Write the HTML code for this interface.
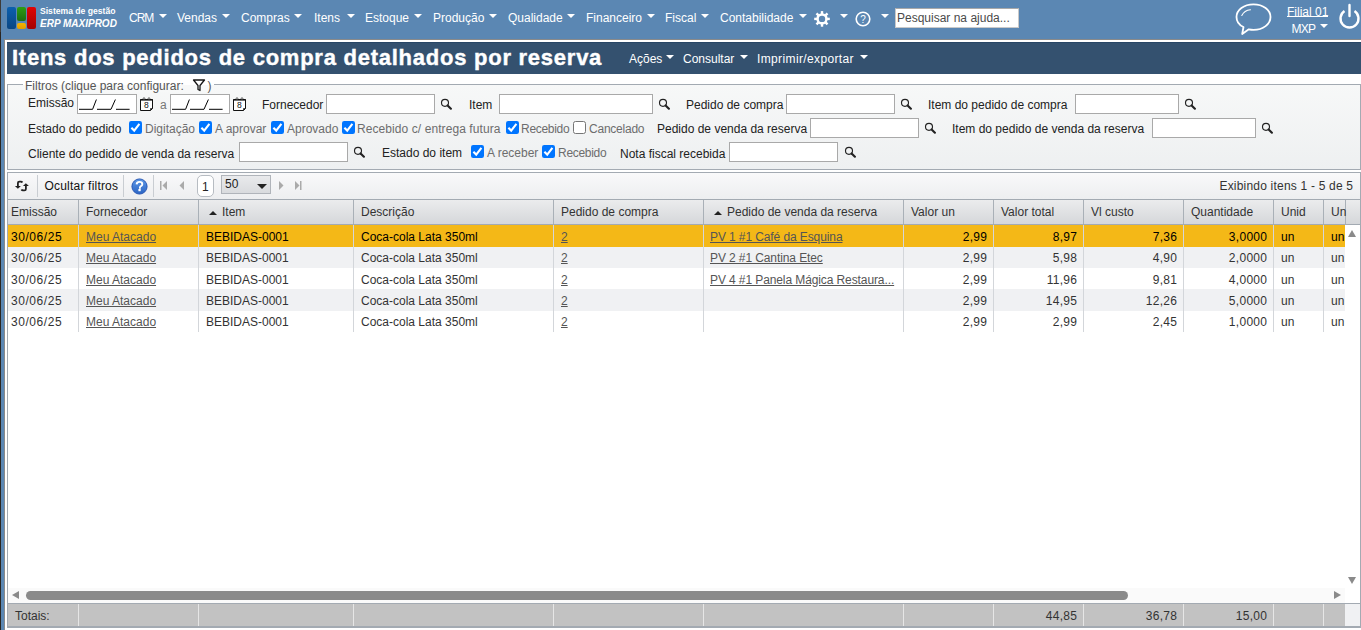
<!DOCTYPE html>
<html><head><meta charset="utf-8">
<style>
*{box-sizing:border-box}
html,body{margin:0;padding:0}
body{width:1361px;height:630px;overflow:hidden;position:relative;background:#5b87b3;font-family:"Liberation Sans",sans-serif;font-size:12px;color:#222}
.a{position:absolute}
.t{position:absolute;white-space:nowrap;line-height:14px}
.nav{color:#fff}
.arr{position:absolute;width:0;height:0;border-left:4px solid transparent;border-right:4px solid transparent;border-top:4px solid #fff}
#strip{left:0;top:0;width:1px;height:630px;background:#2a2622}
#page{left:4px;top:39px;width:1357px;height:591px;background:#fff;border-left:1px solid #8a8a8a;border-top:1px solid #8a8a8a}
#title{left:7px;top:42px;width:1354px;height:32px;background:#34516f;border-top:1px solid #284666}
.inp{position:absolute;background:#fff;border:1px solid #a9a9a9}
.cb{position:absolute;width:13px;height:13px;border-radius:2px;background:#1a73e8}
.cbu{position:absolute;width:13px;height:13px;border-radius:2.5px;background:#fff;border:1px solid #767676}
.lbl{color:#222}
.opt{color:#6d6d6d}
.hd{color:#333}
.cell{color:#333}
.sel{color:#000}
.lk{color:#555;text-decoration:underline}
.tot{color:#333}
</style></head><body>
<div class="a" id="strip"></div><div class="a" style="left:0;top:0;width:1px;height:32px;background:#3d3b38"></div>

<!-- logo -->
<div class="a" style="left:7px;top:7px;width:9px;height:22px;border-radius:2px;background:linear-gradient(#0b5fae,#0a4683)"></div>
<div class="a" style="left:17px;top:7px;width:9px;height:14px;border-radius:2px;background:linear-gradient(#2d9e12,#1d6e12)"></div>
<div class="a" style="left:17px;top:23px;width:9px;height:6px;border-radius:2px;background:linear-gradient(#f3b200,#e39d00)"></div>
<div class="a" style="left:27px;top:7px;width:9px;height:22px;border-radius:2px;background:linear-gradient(#e00404,#a30303)"></div>
<div class="t nav" style="left:40px;top:5px;font-size:8.6px;font-weight:bold;line-height:12px">Sistema de gestão</div>
<div class="t nav" style="left:40px;top:17.8px;font-size:10px;font-weight:bold;font-style:italic;line-height:12px">ERP MAXIPROD</div>

<!-- nav -->
<div class="t nav" style="left:129px;top:11px;letter-spacing:-1px">CRM</div><div class="arr" style="left:159px;top:14px"></div>
<div class="t nav" style="left:177px;top:11px">Vendas</div><div class="arr" style="left:222px;top:14px"></div>
<div class="t nav" style="left:241px;top:11px">Compras</div><div class="arr" style="left:294px;top:14px"></div>
<div class="t nav" style="left:314px;top:11px">Itens</div><div class="arr" style="left:347px;top:14px"></div>
<div class="t nav" style="left:365px;top:11px">Estoque</div><div class="arr" style="left:414px;top:14px"></div>
<div class="t nav" style="left:433px;top:11px">Produção</div><div class="arr" style="left:489px;top:14px"></div>
<div class="t nav" style="left:508px;top:11px">Qualidade</div><div class="arr" style="left:567px;top:14px"></div>
<div class="t nav" style="left:586px;top:11px">Financeiro</div><div class="arr" style="left:647px;top:14px"></div>
<div class="t nav" style="left:665px;top:11px">Fiscal</div><div class="arr" style="left:701px;top:14px"></div>
<div class="t nav" style="left:720px;top:11px">Contabilidade</div><div class="arr" style="left:799px;top:14px"></div>
<!-- gear -->
<svg class="a" style="left:814px;top:11px" width="16" height="16" viewBox="0 0 16 16">
 <g fill="#fff" transform="translate(8 7.9)">
  <rect x="-1.2" y="-7.8" width="2.4" height="15.6"/>
  <rect x="-1.2" y="-7.8" width="2.4" height="15.6" transform="rotate(45)"/>
  <rect x="-1.2" y="-7.8" width="2.4" height="15.6" transform="rotate(90)"/>
  <rect x="-1.2" y="-7.8" width="2.4" height="15.6" transform="rotate(135)"/>
 </g>
 <circle cx="8" cy="7.9" r="5.7" fill="#fff"/><circle cx="8" cy="7.9" r="3.2" fill="#5b87b3"/>
</svg>
<div class="arr" style="left:840px;top:14px"></div>
<!-- help -->
<svg class="a" style="left:855px;top:11px" width="16" height="16" viewBox="0 0 16 16">
 <circle cx="8" cy="8" r="6.8" fill="none" stroke="#fff" stroke-width="1.6"/>
 <text x="8" y="11.6" text-anchor="middle" font-family="Liberation Sans" font-size="10" fill="#fff">?</text>
</svg>
<div class="arr" style="left:881px;top:14px"></div>
<div class="a" style="left:895px;top:8px;width:124px;height:20px;background:#fff;border:1px solid #c9c9c9;border-top-color:#a9a9a9"></div>
<div class="t" style="left:897px;top:11px;color:#4a4a4a">Pesquisar na ajuda...</div>
<!-- chat bubble -->
<svg class="a" style="left:1234px;top:0px" width="40" height="38" viewBox="0 0 40 38">
 <path d="M9.5 27 C4.5 24.8 2.5 21.5 2.5 17 C2.5 9.8 9.9 4.3 19.5 4.3 C29.1 4.3 36.5 9.8 36.5 17 C36.5 24.2 29.1 29.8 19.5 29.8 C17.8 29.8 16.2 29.6 14.8 29.3 L8.2 34 Z" fill="none" stroke="#fff" stroke-width="1.8" stroke-linejoin="round"/>
 <path d="M7.8 15.5 C9.5 12 12.5 10.2 16.5 9.8" fill="none" stroke="#fff" stroke-width="1.1" stroke-linecap="round"/>
</svg>
<div class="t nav" style="left:1287px;top:5px">Filial 01</div><div class="a" style="left:1287px;top:16px;width:41px;height:1px;background:#fff"></div>
<div class="t nav" style="left:1291.5px;top:22px;letter-spacing:-0.8px">MXP</div><div class="arr" style="left:1320px;top:24px"></div>
<!-- power -->
<svg class="a" style="left:1338px;top:3px" width="23" height="26" viewBox="0 0 23 26">
 <path d="M6.5 8 A9 9 0 1 0 16.5 8" fill="none" stroke="#fff" stroke-width="2.4"/>
 <line x1="11.5" y1="2" x2="11.5" y2="13" stroke="#fff" stroke-width="2.4" stroke-linecap="round"/>
</svg>

<div class="a" id="page"></div>
<div class="a" id="title"></div>
<div class="t" style="left:12px;top:45px;font-size:22px;line-height:26px;font-weight:bold;color:#fff;letter-spacing:0.75px;-webkit-text-stroke:0.4px #fff">Itens dos pedidos de compra detalhados por reserva</div>
<div class="t nav" style="left:629px;top:52px">Ações</div><div class="arr" style="left:666px;top:55px"></div>
<div class="t nav" style="left:683px;top:52px">Consultar</div><div class="arr" style="left:740px;top:55px"></div>
<div class="t nav" style="left:757px;top:52px;letter-spacing:0.37px">Imprimir/exportar</div><div class="arr" style="left:860px;top:55px"></div>

<!-- filters fieldset -->
<div class="a" style="left:7px;top:84px;width:1354px;height:86px;border:1px solid #a3aab2;background:linear-gradient(#f7f8f8,#eef0f1)"></div>
<div class="a" style="left:23px;top:78px;width:191px;height:14px;background:#fff"></div>
<div class="a" style="left:23px;top:85px;width:191px;height:7px;background:#f7f8f8"></div>
<div class="t" style="left:25px;top:79px;color:#555">Filtros (clique para configurar:</div>
<svg class="a" style="left:192px;top:78px" width="14" height="14" viewBox="0 0 14 14"><path d="M1.5 2 H12.5 L8 7.5 V12.5 L6 11.5 V7.5 Z" fill="none" stroke="#151515" stroke-width="1.3" stroke-linejoin="round"/></svg>
<div class="t" style="left:207.5px;top:79px;color:#555">)</div>

<!-- row 1 -->
<div class="t lbl" style="left:28px;top:96px">Emissão</div>
<div class="inp" style="left:77px;top:94px;width:60px;height:20px"></div>
<svg class="a" style="left:77px;top:94px" width="60" height="20" viewBox="0 0 60 20"><path d="M2 15.3 H15.6 L19.4 5.5 M20 15.3 H34 L38.4 5.5 M39 15.3 H52.6" fill="none" stroke="#000" stroke-width="1"/></svg>
<svg class="a" style="left:140px;top:97px" width="14" height="15" viewBox="0 0 14 15"><path d="M0.5 2.5 H12.5 V11.5 L10.5 13.5 H0.5 Z" fill="#fff" stroke="#111" stroke-width="1"/><rect x="0.5" y="2" width="12" height="1.6" fill="#111"/><circle cx="4" cy="1.6" r="0.9" fill="#fff" stroke="#111" stroke-width="0.6"/><circle cx="9" cy="1.6" r="0.9" fill="#fff" stroke="#111" stroke-width="0.6"/><path d="M10.5 13.5 V11.5 H12.5" fill="none" stroke="#111" stroke-width="0.8"/><text x="6.3" y="11.3" text-anchor="middle" font-size="8.5" font-family="Liberation Sans" fill="#111">8</text></svg>
<div class="t" style="left:160px;top:98px;color:#777">a</div>
<div class="inp" style="left:170px;top:94px;width:60px;height:20px"></div>
<svg class="a" style="left:170px;top:94px" width="60" height="20" viewBox="0 0 60 20"><path d="M2 15.3 H15.6 L19.4 5.5 M20 15.3 H34 L38.4 5.5 M39 15.3 H52.6" fill="none" stroke="#000" stroke-width="1"/></svg>
<svg class="a" style="left:233px;top:97px" width="14" height="15" viewBox="0 0 14 15"><path d="M0.5 2.5 H12.5 V11.5 L10.5 13.5 H0.5 Z" fill="#fff" stroke="#111" stroke-width="1"/><rect x="0.5" y="2" width="12" height="1.6" fill="#111"/><circle cx="4" cy="1.6" r="0.9" fill="#fff" stroke="#111" stroke-width="0.6"/><circle cx="9" cy="1.6" r="0.9" fill="#fff" stroke="#111" stroke-width="0.6"/><path d="M10.5 13.5 V11.5 H12.5" fill="none" stroke="#111" stroke-width="0.8"/><text x="6.3" y="11.3" text-anchor="middle" font-size="8.5" font-family="Liberation Sans" fill="#111">8</text></svg>
<div class="t lbl" style="left:262px;top:98px">Fornecedor</div>
<div class="inp" style="left:326px;top:94px;width:109px;height:20px"></div>
<svg class="a srch" style="left:440px;top:97px" width="13" height="13" viewBox="0 0 13 13"><circle cx="5" cy="5.8" r="3.5" fill="none" stroke="#222" stroke-width="1.15"/><path d="M7.6 8.4 L10.9 11.7" stroke="#222" stroke-width="2.1" stroke-linecap="round"/></svg>
<div class="t lbl" style="left:469px;top:98px">Item</div>
<div class="inp" style="left:499px;top:94px;width:154px;height:20px"></div>
<svg class="a srch" style="left:658px;top:97px" width="13" height="13" viewBox="0 0 13 13"><circle cx="5" cy="5.8" r="3.5" fill="none" stroke="#222" stroke-width="1.15"/><path d="M7.6 8.4 L10.9 11.7" stroke="#222" stroke-width="2.1" stroke-linecap="round"/></svg>
<div class="t lbl" style="left:686px;top:98px">Pedido de compra</div>
<div class="inp" style="left:786px;top:94px;width:109px;height:20px"></div>
<svg class="a srch" style="left:900px;top:97px" width="13" height="13" viewBox="0 0 13 13"><circle cx="5" cy="5.8" r="3.5" fill="none" stroke="#222" stroke-width="1.15"/><path d="M7.6 8.4 L10.9 11.7" stroke="#222" stroke-width="2.1" stroke-linecap="round"/></svg>
<div class="t lbl" style="left:928px;top:98px">Item do pedido de compra</div>
<div class="inp" style="left:1075px;top:94px;width:104px;height:20px"></div>
<svg class="a srch" style="left:1184px;top:97px" width="13" height="13" viewBox="0 0 13 13"><circle cx="5" cy="5.8" r="3.5" fill="none" stroke="#222" stroke-width="1.15"/><path d="M7.6 8.4 L10.9 11.7" stroke="#222" stroke-width="2.1" stroke-linecap="round"/></svg>

<!-- row 2 -->
<div class="t lbl" style="left:28px;top:122px">Estado do pedido</div>
<svg class="a" style="left:129px;top:121px" width="13" height="13" viewBox="0 0 13 13"><rect width="13" height="13" rx="2.2" fill="#0075ff"/><path d="M2.4 6.8 L5.2 9.6 L10.4 2.8" fill="none" stroke="#fff" stroke-width="2.1"/></svg>
<div class="t opt" style="left:145px;top:122px">Digitação</div>
<svg class="a" style="left:199px;top:121px" width="13" height="13" viewBox="0 0 13 13"><rect width="13" height="13" rx="2.2" fill="#0075ff"/><path d="M2.4 6.8 L5.2 9.6 L10.4 2.8" fill="none" stroke="#fff" stroke-width="2.1"/></svg>
<div class="t opt" style="left:215px;top:122px">A aprovar</div>
<svg class="a" style="left:271px;top:121px" width="13" height="13" viewBox="0 0 13 13"><rect width="13" height="13" rx="2.2" fill="#0075ff"/><path d="M2.4 6.8 L5.2 9.6 L10.4 2.8" fill="none" stroke="#fff" stroke-width="2.1"/></svg>
<div class="t opt" style="left:287px;top:122px">Aprovado</div>
<svg class="a" style="left:342px;top:121px" width="13" height="13" viewBox="0 0 13 13"><rect width="13" height="13" rx="2.2" fill="#0075ff"/><path d="M2.4 6.8 L5.2 9.6 L10.4 2.8" fill="none" stroke="#fff" stroke-width="2.1"/></svg>
<div class="t opt" style="left:357px;top:122px;letter-spacing:0.08px">Recebido c/ entrega futura</div>
<svg class="a" style="left:506px;top:121px" width="13" height="13" viewBox="0 0 13 13"><rect width="13" height="13" rx="2.2" fill="#0075ff"/><path d="M2.4 6.8 L5.2 9.6 L10.4 2.8" fill="none" stroke="#fff" stroke-width="2.1"/></svg>
<div class="t opt" style="left:521px;top:122px;letter-spacing:-0.29px">Recebido</div>
<div class="cbu" style="left:573px;top:121px"></div>
<div class="t opt" style="left:589px;top:122px;letter-spacing:-0.23px">Cancelado</div>
<div class="t lbl" style="left:657px;top:122px">Pedido de venda da reserva</div>
<div class="inp" style="left:810px;top:118px;width:109px;height:20px"></div>
<svg class="a srch" style="left:924px;top:121px" width="13" height="13" viewBox="0 0 13 13"><circle cx="5" cy="5.8" r="3.5" fill="none" stroke="#222" stroke-width="1.15"/><path d="M7.6 8.4 L10.9 11.7" stroke="#222" stroke-width="2.1" stroke-linecap="round"/></svg>
<div class="t lbl" style="left:952px;top:122px">Item do pedido de venda da reserva</div>
<div class="inp" style="left:1152px;top:118px;width:104px;height:20px"></div>
<svg class="a srch" style="left:1261px;top:121px" width="13" height="13" viewBox="0 0 13 13"><circle cx="5" cy="5.8" r="3.5" fill="none" stroke="#222" stroke-width="1.15"/><path d="M7.6 8.4 L10.9 11.7" stroke="#222" stroke-width="2.1" stroke-linecap="round"/></svg>

<!-- row 3 -->
<div class="t lbl" style="left:28px;top:147px">Cliente do pedido de venda da reserva</div>
<div class="inp" style="left:239px;top:142px;width:109px;height:20px"></div>
<svg class="a srch" style="left:353px;top:145px" width="13" height="13" viewBox="0 0 13 13"><circle cx="5" cy="5.8" r="3.5" fill="none" stroke="#222" stroke-width="1.15"/><path d="M7.6 8.4 L10.9 11.7" stroke="#222" stroke-width="2.1" stroke-linecap="round"/></svg>
<div class="t lbl" style="left:382px;top:146px">Estado do item</div>
<svg class="a" style="left:471px;top:145px" width="13" height="13" viewBox="0 0 13 13"><rect width="13" height="13" rx="2.2" fill="#0075ff"/><path d="M2.4 6.8 L5.2 9.6 L10.4 2.8" fill="none" stroke="#fff" stroke-width="2.1"/></svg>
<div class="t opt" style="left:487px;top:146px">A receber</div>
<svg class="a" style="left:542px;top:145px" width="13" height="13" viewBox="0 0 13 13"><rect width="13" height="13" rx="2.2" fill="#0075ff"/><path d="M2.4 6.8 L5.2 9.6 L10.4 2.8" fill="none" stroke="#fff" stroke-width="2.1"/></svg>
<div class="t opt" style="left:558px;top:146px;letter-spacing:-0.29px">Recebido</div>
<div class="t lbl" style="left:620px;top:147px">Nota fiscal recebida</div>
<div class="inp" style="left:729px;top:142px;width:109px;height:20px"></div>
<svg class="a srch" style="left:844px;top:145px" width="13" height="13" viewBox="0 0 13 13"><circle cx="5" cy="5.8" r="3.5" fill="none" stroke="#222" stroke-width="1.15"/><path d="M7.6 8.4 L10.9 11.7" stroke="#222" stroke-width="2.1" stroke-linecap="round"/></svg>

<div class="a" style="left:7px;top:172px;width:1354px;height:456px;border:1px solid #a3aab2;border-bottom:2px solid #a3aab2;background:#fff"></div>
<div class="a" style="left:8px;top:173px;width:1352px;height:26px;background:linear-gradient(#f9f9fa,#edeef0)"></div>
<div class="a" style="left:8px;top:199px;width:1352px;height:26px;border-top:1px solid #a3aab2;border-bottom:1px solid #a3aab2;background:linear-gradient(#ebeced,#d5d7da)"></div>
<div class="a" style="left:78px;top:200px;width:1px;height:24px;background:#a9b0b7"></div>
<div class="a" style="left:198px;top:200px;width:1px;height:24px;background:#a9b0b7"></div>
<div class="a" style="left:353px;top:200px;width:1px;height:24px;background:#a9b0b7"></div>
<div class="a" style="left:553px;top:200px;width:1px;height:24px;background:#a9b0b7"></div>
<div class="a" style="left:703px;top:200px;width:1px;height:24px;background:#a9b0b7"></div>
<div class="a" style="left:903px;top:200px;width:1px;height:24px;background:#a9b0b7"></div>
<div class="a" style="left:993px;top:200px;width:1px;height:24px;background:#a9b0b7"></div>
<div class="a" style="left:1083px;top:200px;width:1px;height:24px;background:#a9b0b7"></div>
<div class="a" style="left:1183px;top:200px;width:1px;height:24px;background:#a9b0b7"></div>
<div class="a" style="left:1273px;top:200px;width:1px;height:24px;background:#a9b0b7"></div>
<div class="a" style="left:1323px;top:200px;width:1px;height:24px;background:#a9b0b7"></div>
<div class="a" style="left:1345px;top:200px;width:1px;height:24px;background:#a9b0b7"></div>
<div class="t hd" style="left:11px;top:205px">Emissão</div>
<div class="t hd" style="left:86px;top:205px">Fornecedor</div>
<div class="t hd" style="left:222px;top:205px">Item</div>
<div class="t hd" style="left:361px;top:205px">Descrição</div>
<div class="t hd" style="left:561px;top:205px">Pedido de compra</div>
<div class="t hd" style="left:727px;top:205px">Pedido de venda da reserva</div>
<div class="t hd" style="left:911px;top:205px">Valor un</div>
<div class="t hd" style="left:1001px;top:205px">Valor total</div>
<div class="t hd" style="left:1091px;top:205px">Vl custo</div>
<div class="t hd" style="left:1191px;top:205px">Quantidade</div>
<div class="t hd" style="left:1281px;top:205px">Unid</div>
<div class="t hd" style="left:1331px;top:205px">Un</div>
<div class="a" style="left:209px;top:211px;width:0;height:0;border-left:4px solid transparent;border-right:4px solid transparent;border-bottom:4px solid #222"></div>
<div class="a" style="left:714px;top:211px;width:0;height:0;border-left:4px solid transparent;border-right:4px solid transparent;border-bottom:4px solid #222"></div>
<div class="a" style="left:8px;top:225px;width:1337px;height:22px;background:#f4b817"></div>
<div class="t sel" style="left:11px;top:229.5px;letter-spacing:0.55px">30/06/25</div>
<div class="t sel lk" style="left:86px;top:229.5px">Meu Atacado</div>
<div class="t sel" style="left:206px;top:229.5px">BEBIDAS-0001</div>
<div class="t sel" style="left:361px;top:229.5px">Coca-cola Lata 350ml</div>
<div class="t sel lk" style="left:561px;top:229.5px">2</div>
<div class="t sel lk" style="left:710px;top:229.5px;letter-spacing:-0.1px">PV 1 #1 Café da Esquina</div>
<div class="t sel" style="right:373.7px;top:229.5px;letter-spacing:0.3px">2,99</div>
<div class="t sel" style="right:283.7px;top:229.5px;letter-spacing:0.3px">8,97</div>
<div class="t sel" style="right:183.7px;top:229.5px;letter-spacing:0.3px">7,36</div>
<div class="t sel" style="right:93.7px;top:229.5px;letter-spacing:0.3px">3,0000</div>
<div class="t sel" style="left:1281px;top:229.5px">un</div>
<div class="t sel" style="left:1331px;top:229.5px;width:14px;overflow:hidden">un</div>
<div class="a" style="left:8px;top:247px;width:1337px;height:21px;background:#f0f1f3"></div>
<div class="t cell" style="left:11px;top:250.5px;letter-spacing:0.55px">30/06/25</div>
<div class="t cell lk" style="left:86px;top:250.5px">Meu Atacado</div>
<div class="t cell" style="left:206px;top:250.5px">BEBIDAS-0001</div>
<div class="t cell" style="left:361px;top:250.5px">Coca-cola Lata 350ml</div>
<div class="t cell lk" style="left:561px;top:250.5px">2</div>
<div class="t cell lk" style="left:710px;top:250.5px;letter-spacing:-0.1px">PV 2 #1 Cantina Etec</div>
<div class="t cell" style="right:373.7px;top:250.5px;letter-spacing:0.3px">2,99</div>
<div class="t cell" style="right:283.7px;top:250.5px;letter-spacing:0.3px">5,98</div>
<div class="t cell" style="right:183.7px;top:250.5px;letter-spacing:0.3px">4,90</div>
<div class="t cell" style="right:93.7px;top:250.5px;letter-spacing:0.3px">2,0000</div>
<div class="t cell" style="left:1281px;top:250.5px">un</div>
<div class="t cell" style="left:1331px;top:250.5px;width:14px;overflow:hidden">un</div>
<div class="a" style="left:8px;top:268px;width:1337px;height:21px;background:#fff"></div>
<div class="t cell" style="left:11px;top:272.5px;letter-spacing:0.55px">30/06/25</div>
<div class="t cell lk" style="left:86px;top:272.5px">Meu Atacado</div>
<div class="t cell" style="left:206px;top:272.5px">BEBIDAS-0001</div>
<div class="t cell" style="left:361px;top:272.5px">Coca-cola Lata 350ml</div>
<div class="t cell lk" style="left:561px;top:272.5px">2</div>
<div class="t cell lk" style="left:710px;top:272.5px;letter-spacing:-0.1px">PV 4 #1 Panela Mágica Restaura...</div>
<div class="t cell" style="right:373.7px;top:272.5px;letter-spacing:0.3px">2,99</div>
<div class="t cell" style="right:283.7px;top:272.5px;letter-spacing:0.3px">11,96</div>
<div class="t cell" style="right:183.7px;top:272.5px;letter-spacing:0.3px">9,81</div>
<div class="t cell" style="right:93.7px;top:272.5px;letter-spacing:0.3px">4,0000</div>
<div class="t cell" style="left:1281px;top:272.5px">un</div>
<div class="t cell" style="left:1331px;top:272.5px;width:14px;overflow:hidden">un</div>
<div class="a" style="left:8px;top:289px;width:1337px;height:22px;background:#f0f1f3"></div>
<div class="t cell" style="left:11px;top:293.5px;letter-spacing:0.55px">30/06/25</div>
<div class="t cell lk" style="left:86px;top:293.5px">Meu Atacado</div>
<div class="t cell" style="left:206px;top:293.5px">BEBIDAS-0001</div>
<div class="t cell" style="left:361px;top:293.5px">Coca-cola Lata 350ml</div>
<div class="t cell lk" style="left:561px;top:293.5px">2</div>
<div class="t cell" style="right:373.7px;top:293.5px;letter-spacing:0.3px">2,99</div>
<div class="t cell" style="right:283.7px;top:293.5px;letter-spacing:0.3px">14,95</div>
<div class="t cell" style="right:183.7px;top:293.5px;letter-spacing:0.3px">12,26</div>
<div class="t cell" style="right:93.7px;top:293.5px;letter-spacing:0.3px">5,0000</div>
<div class="t cell" style="left:1281px;top:293.5px">un</div>
<div class="t cell" style="left:1331px;top:293.5px;width:14px;overflow:hidden">un</div>
<div class="a" style="left:8px;top:311px;width:1337px;height:21px;background:#fff"></div>
<div class="t cell" style="left:11px;top:314.5px;letter-spacing:0.55px">30/06/25</div>
<div class="t cell lk" style="left:86px;top:314.5px">Meu Atacado</div>
<div class="t cell" style="left:206px;top:314.5px">BEBIDAS-0001</div>
<div class="t cell" style="left:361px;top:314.5px">Coca-cola Lata 350ml</div>
<div class="t cell lk" style="left:561px;top:314.5px">2</div>
<div class="t cell" style="right:373.7px;top:314.5px;letter-spacing:0.3px">2,99</div>
<div class="t cell" style="right:283.7px;top:314.5px;letter-spacing:0.3px">2,99</div>
<div class="t cell" style="right:183.7px;top:314.5px;letter-spacing:0.3px">2,45</div>
<div class="t cell" style="right:93.7px;top:314.5px;letter-spacing:0.3px">1,0000</div>
<div class="t cell" style="left:1281px;top:314.5px">un</div>
<div class="t cell" style="left:1331px;top:314.5px;width:14px;overflow:hidden">un</div>
<div class="a" style="left:78px;top:225px;width:1px;height:107px;background:#d3d6da"></div>
<div class="a" style="left:198px;top:225px;width:1px;height:107px;background:#d3d6da"></div>
<div class="a" style="left:353px;top:225px;width:1px;height:107px;background:#d3d6da"></div>
<div class="a" style="left:553px;top:225px;width:1px;height:107px;background:#d3d6da"></div>
<div class="a" style="left:703px;top:225px;width:1px;height:107px;background:#d3d6da"></div>
<div class="a" style="left:903px;top:225px;width:1px;height:107px;background:#d3d6da"></div>
<div class="a" style="left:993px;top:225px;width:1px;height:107px;background:#d3d6da"></div>
<div class="a" style="left:1083px;top:225px;width:1px;height:107px;background:#d3d6da"></div>
<div class="a" style="left:1183px;top:225px;width:1px;height:107px;background:#d3d6da"></div>
<div class="a" style="left:1273px;top:225px;width:1px;height:107px;background:#d3d6da"></div>
<div class="a" style="left:1323px;top:225px;width:1px;height:107px;background:#d3d6da"></div>
<div class="a" style="left:1345px;top:225px;width:15px;height:363px;background:#fff"></div>
<div class="a" style="left:1348px;top:230px;width:0;height:0;border-left:4.5px solid transparent;border-right:4.5px solid transparent;border-bottom:7px solid #8a8a8a"></div>
<div class="a" style="left:1348px;top:577px;width:0;height:0;border-left:4.5px solid transparent;border-right:4.5px solid transparent;border-top:7px solid #8a8a8a"></div>
<div class="a" style="left:8px;top:588px;width:1337px;height:15px;background:#fafafa"></div>
<div class="a" style="left:12px;top:591px;width:0;height:0;border-top:4.5px solid transparent;border-bottom:4.5px solid transparent;border-right:7px solid #8a8a8a"></div>
<div class="a" style="left:1334px;top:591px;width:0;height:0;border-top:4.5px solid transparent;border-bottom:4.5px solid transparent;border-left:7px solid #8a8a8a"></div>
<div class="a" style="left:26px;top:591px;width:1102px;height:9px;border-radius:4.5px;background:#8a8a8a"></div>
<div class="a" style="left:8px;top:603px;width:1352px;height:1px;background:#a3aab2"></div>
<div class="a" style="left:8px;top:604px;width:1337px;height:22px;background:#c2c2c2"></div>
<div class="a" style="left:1345px;top:604px;width:15px;height:22px;background:#f0f1f3"></div>
<div class="a" style="left:78px;top:604px;width:1px;height:22px;background:#e6e6e6"></div>
<div class="a" style="left:198px;top:604px;width:1px;height:22px;background:#e6e6e6"></div>
<div class="a" style="left:353px;top:604px;width:1px;height:22px;background:#e6e6e6"></div>
<div class="a" style="left:553px;top:604px;width:1px;height:22px;background:#e6e6e6"></div>
<div class="a" style="left:703px;top:604px;width:1px;height:22px;background:#e6e6e6"></div>
<div class="a" style="left:903px;top:604px;width:1px;height:22px;background:#e6e6e6"></div>
<div class="a" style="left:993px;top:604px;width:1px;height:22px;background:#e6e6e6"></div>
<div class="a" style="left:1083px;top:604px;width:1px;height:22px;background:#e6e6e6"></div>
<div class="a" style="left:1183px;top:604px;width:1px;height:22px;background:#e6e6e6"></div>
<div class="a" style="left:1273px;top:604px;width:1px;height:22px;background:#e6e6e6"></div>
<div class="a" style="left:1323px;top:604px;width:1px;height:22px;background:#e6e6e6"></div>
<div class="t tot" style="left:15px;top:609px">Totais:</div>
<div class="t tot" style="right:283.7px;top:609px;letter-spacing:0.3px">44,85</div>
<div class="t tot" style="right:183.7px;top:609px;letter-spacing:0.3px">36,78</div>
<div class="t tot" style="right:93.7px;top:609px;letter-spacing:0.3px">15,00</div>
<!-- toolbar -->
<svg class="a" style="left:10px;top:175px" width="26" height="22" viewBox="0 0 26 22">
 <path d="M7.9 11.5 V8 Q7.9 6.6 9.4 6.6 H10.8 Q11.9 6.6 12.4 7.4" fill="none" stroke="#222" stroke-width="1.8"/>
 <path d="M4.9 10.9 H10.9 L7.9 13.8 Z" fill="#222"/>
 <path d="M15.9 10.5 V14 Q15.9 15.4 14.4 15.4 H13 Q11.9 15.4 11.4 14.6" fill="none" stroke="#222" stroke-width="1.8"/>
 <path d="M12.9 11.1 H18.9 L15.9 8.2 Z" fill="#222"/>
</svg>
<div class="a" style="left:37px;top:175px;width:1px;height:22px;background:#c9cdd2"></div>
<div class="t" style="left:44.5px;top:179px;color:#111;letter-spacing:0.2px">Ocultar filtros</div>
<div class="a" style="left:123px;top:175px;width:1px;height:22px;background:#c9cdd2"></div>
<svg class="a" style="left:130.5px;top:177.5px" width="17" height="17" viewBox="0 0 17 17">
 <defs><linearGradient id="hg" x1="0" y1="0" x2="0" y2="1"><stop offset="0" stop-color="#5c98e6"/><stop offset="1" stop-color="#2b64c4"/></linearGradient></defs>
 <circle cx="8.5" cy="8.5" r="7.6" fill="url(#hg)" stroke="#2050b0" stroke-width="0.9"/>
 <path d="M5.6 6.3 Q5.8 3.9 8.5 3.9 Q11.3 3.9 11.3 6.2 Q11.3 7.6 9.6 8.3 Q8.9 8.7 8.9 9.9 H8" fill="none" stroke="#fff" stroke-width="1.9"/>
 <rect x="7.4" y="11" width="2.3" height="2.2" fill="#fff"/>
</svg>
<div class="a" style="left:153px;top:175px;width:1px;height:22px;background:#c9cdd2"></div>
<!-- pager -->
<svg class="a" style="left:158px;top:180px" width="150" height="12" viewBox="0 0 150 12">
 <rect x="2" y="1" width="1.5" height="9" fill="#aaa"/><path d="M9 1 L4.5 5.5 L9 10 Z" fill="#aaa"/>
 <path d="M26 1 L21.5 5.5 L26 10 Z" fill="#aaa"/>
 <path d="M121 1 L125.5 5.5 L121 10 Z" fill="#aaa"/>
 <path d="M137 1 L141.5 5.5 L137 10 Z" fill="#aaa"/><rect x="142" y="1" width="1.5" height="9" fill="#aaa"/>
</svg>
<div class="a" style="left:197px;top:175px;width:17px;height:22px;border:1px solid #b7bcc2;border-radius:5px;background:#fff"></div>
<div class="t" style="left:202px;top:180px;color:#222">1</div>
<div class="a" style="left:221px;top:175px;width:50px;height:19px;border:1px solid #b0b4ba;background:linear-gradient(#e9eaec,#d9dbde)"></div>
<div class="t" style="left:225px;top:177px;color:#222">50</div>
<div class="a" style="left:257px;top:184px;width:0;height:0;border-left:5px solid transparent;border-right:5px solid transparent;border-top:5px solid #222"></div>
<div class="t" style="right:7.8px;top:179px;color:#333;letter-spacing:0.2px">Exibindo itens 1 - 5 de 5</div>

</body></html>
